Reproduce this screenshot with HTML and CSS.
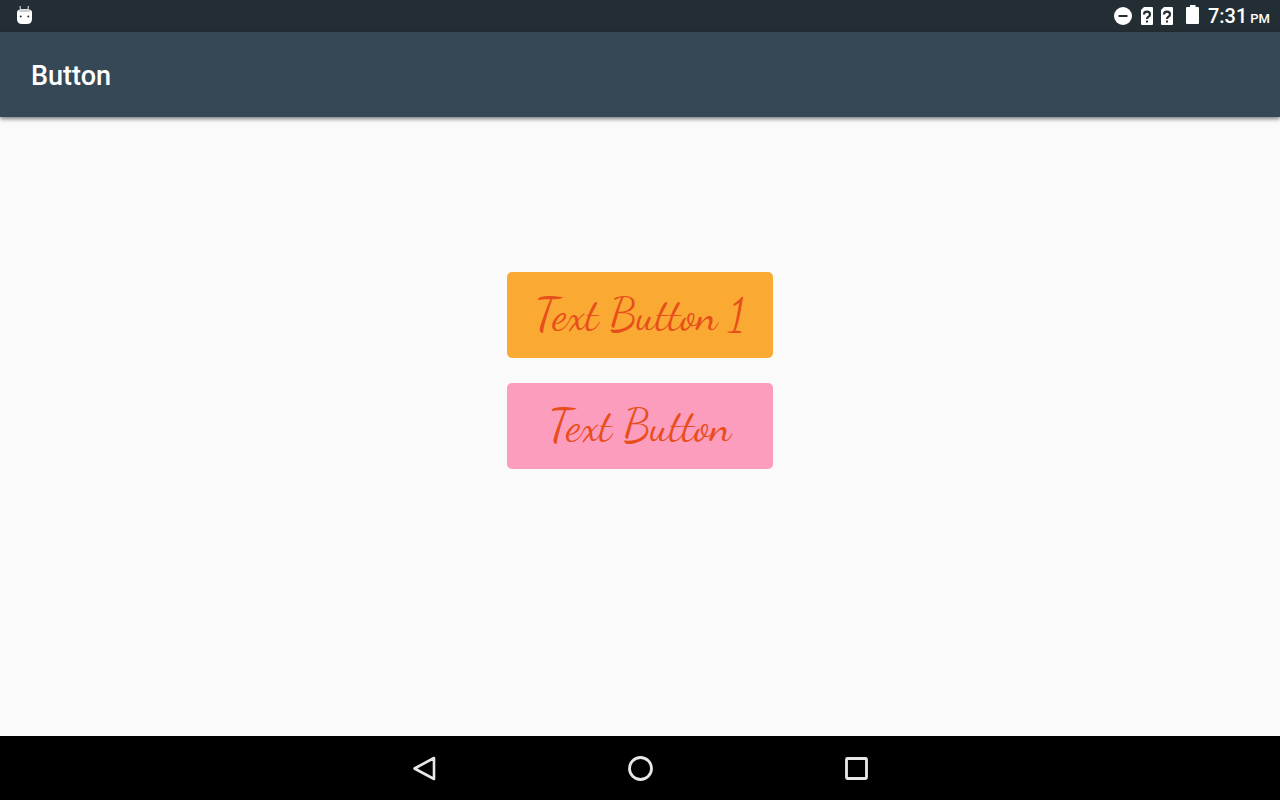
FILE: index.html
```html
<!DOCTYPE html>
<html lang="en">
<head>
<meta charset="utf-8">
<meta name="viewport" content="width=device-width, initial-scale=1">
<title>Button</title>
<link rel="stylesheet" href="styles.css">
</head>
<body>
<div class="status-bar">
  <svg class="debug-icon" width="16" height="20" viewBox="0 0 16 20" aria-hidden="true">
    <path d="M4 1l.7 4M12.500 1l-.7 4" stroke="#b9bec0" stroke-width="1.300"/>
    <path d="M1 7Q1 4 8.500 4T16 7V14Q16 19 11 19H6Q1 19 1 14Z" fill="#fff"/>
    <path d="M2 6.500Q3 4.500 8.500 4.500T15 6.500Q8.500 7.500 2 6.500Z" fill="#c9cdce"/>
    <circle cx="4.700" cy="11.500" r="1" fill="#263238"/>
    <circle cx="12.300" cy="11.500" r="1" fill="#263238"/>
  </svg>
  <div class="status-icons">
    <svg width="18" height="18" viewBox="0 0 18 18" aria-hidden="true">
      <circle cx="9" cy="9" r="9" fill="#fff"/>
      <path d="M4.500 9h9" stroke="#232e34" stroke-width="2"/>
    </svg>
    <div class="sims">
      <svg width="12" height="18" viewBox="0 0 12 18" aria-hidden="true">
        <path d="M3 0h8q1 0 1 1v16q0 1-1 1H1q-1 0-1-1V3Z" fill="#fff"/>
        <path d="M3 7.500Q3 4.700 6 4.700T9 7.400Q9 8.600 7.500 9.600T6 12" fill="none" stroke="#232e34" stroke-width="2.200"/>
        <path d="M5 13.500h2v2H5z" fill="#232e34"/>
      </svg>
      <svg width="12" height="18" viewBox="0 0 12 18" aria-hidden="true">
        <path d="M3 0h8q1 0 1 1v16q0 1-1 1H1q-1 0-1-1V3Z" fill="#fff"/>
        <path d="M3 7.500Q3 4.700 6 4.700T9 7.400Q9 8.600 7.500 9.600T6 12" fill="none" stroke="#232e34" stroke-width="2.200"/>
        <path d="M5 13.500h2v2H5z" fill="#232e34"/>
      </svg>
    </div>
    <svg class="battery" width="13" height="20" viewBox="0 0 13 20" aria-hidden="true">
      <path d="M4 0h5.500v2H12q1 0 1 1V18q0 1-1 1H1q-1 0-1-1V3q0-1 1-1h3Z" fill="#fff"/>
    </svg>
    <time class="clock">7:31 <span class="meridiem">PM</span></time>
  </div>
</div>
<header class="app-bar"><h1 class="title">Button</h1></header>
<main class="content">
  <div class="button-stack">
    <button class="text-button amber" type="button">Text Button 1</button>
    <button class="text-button pink" type="button">Text Button</button>
  </div>
</main>
<nav class="nav-bar" aria-label="System navigation">
  <button class="nav-button" type="button" aria-label="Back">
    <svg width="28" height="28" viewBox="0 0 28 28"><path d="M4.500 14.500L24 4V25Z" fill="none" stroke="#e8e8e8" stroke-width="2.600" stroke-linejoin="round"/></svg>
  </button>
  <button class="nav-button" type="button" aria-label="Home">
    <svg width="28" height="28" viewBox="0 0 28 28"><circle cx="14.500" cy="14.500" r="11" fill="none" stroke="#e8e8e8" stroke-width="2.800"/></svg>
  </button>
  <button class="nav-button" type="button" aria-label="Recent apps">
    <svg width="28" height="28" viewBox="0 0 28 28"><rect x="4.500" y="4.500" width="20" height="20" rx="1" fill="none" stroke="#e8e8e8" stroke-width="2.800"/></svg>
  </button>
</nav>
</body>
</html>
```
FILE: styles.css
```css
* {
  box-sizing: border-box;
}

body {
  margin: 0;
  min-height: 100vh;
  display: flex;
  flex-direction: column;
  background: #fafafa;
  font-family: Roboto, sans-serif;
}

svg {
  display: block;
}

.status-bar {
  height: 32px;
  padding: 0 10px 0 16px;
  display: flex;
  align-items: center;
  justify-content: space-between;
  background: #232e34;
  color: #fff;
}

.debug-icon {
  margin-bottom: 2px;
}

.status-icons {
  display: flex;
  align-items: center;
  gap: 9px;
}

.sims {
  display: flex;
  gap: 8px;
}

.battery {
  margin: 0 0 2px 4px;
}

.clock {
  padding-top: 2px;
  font-size: 20px;
  line-height: 30px;
  font-weight: 500;
}

.meridiem {
  margin-left: -2px;
  font-size: 13px;
}

.app-bar {
  padding: 26px 31px 23px;
  background: #364855;
  box-shadow: 0 2px 4px rgba(0, 0, 0, 0.5);
}

.title {
  margin: 0;
  color: #fff;
  font-size: 27px;
  line-height: 36px;
  font-weight: 500;
}

.content {
  flex: 1;
  display: flex;
  justify-content: center;
  align-items: flex-start;
  padding: 155px 16px 24px;
}

.button-stack {
  min-width: 266px;
  display: grid;
  gap: 25px;
}

.text-button {
  padding: 17px 16px;
  border: 0;
  border-radius: 5px;
  color: #e84e1b;
  font-family: "Dancing Script", "Liberation Serif", cursive;
  font-size: 44px;
  line-height: 52px;
}

.amber {
  background: #faaa33;
}

.pink {
  background: #fd9dbd;
}

.nav-bar {
  height: 64px;
  display: flex;
  justify-content: center;
  background: #000;
}

.nav-button {
  width: 216px;
  padding: 0;
  border: 0;
  background: transparent;
  display: flex;
  align-items: center;
  justify-content: center;
}
```
